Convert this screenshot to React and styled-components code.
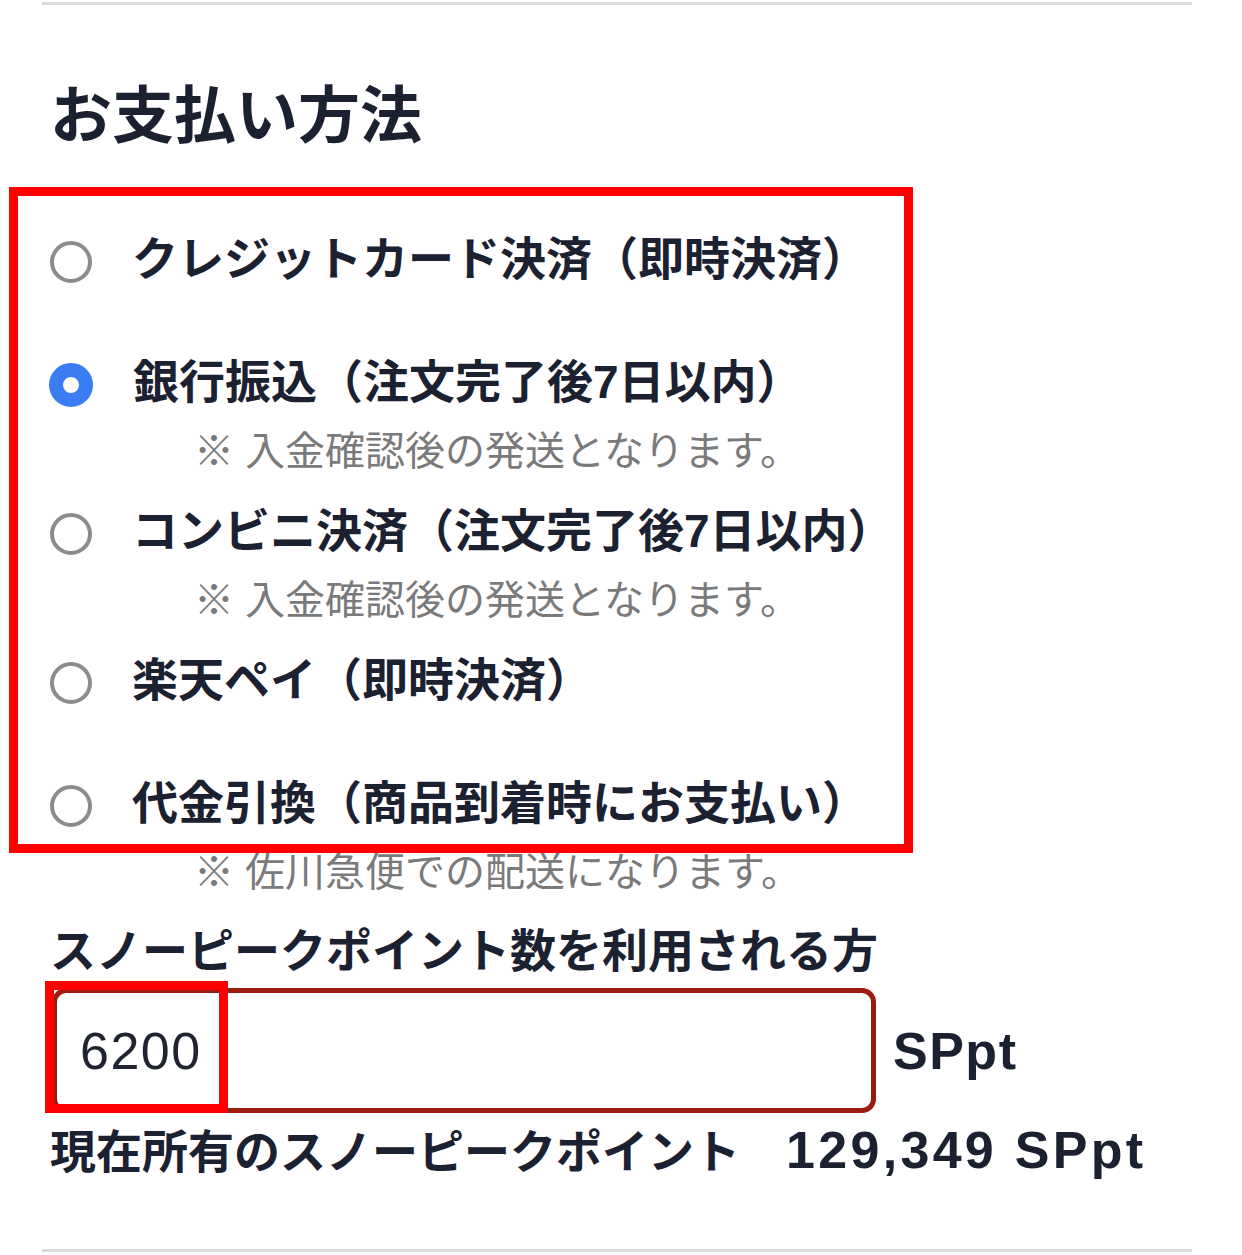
import React from 'react'
import styled, { createGlobalStyle } from 'styled-components'

const GlobalStyle = createGlobalStyle`
    html, body {
        margin: 0;
        padding: 0;
        background: #ffffff;
    }
    body {
        font-family: "Liberation Sans", "Noto Sans CJK JP", sans-serif;
        color: #1b2130;
    }
`

const methods = [
    { id: 'card', label: 'クレジットカード決済（即時決済）' },
    { id: 'bank', label: '銀行振込（注文完了後7日以内）', note: '※ 入金確認後の発送となります。', checked: true },
    { id: 'cvs', label: 'コンビニ決済（注文完了後7日以内）', note: '※ 入金確認後の発送となります。' },
    { id: 'rakuten', label: '楽天ペイ（即時決済）' },
    { id: 'cod', label: '代金引換（商品到着時にお支払い）', note: '※ 佐川急便での配送になります。' },
]

function App() {
    return (
        <Page>
            <GlobalStyle />
            <Divider />
            <Section>
                <Title>お支払い方法</Title>
                <MethodList>
                    {methods.map((m) => (
                        <Method key={m.id}>
                            <MethodRow>
                                <Radio type="radio" name="payment" defaultChecked={!!m.checked} />
                                <MethodLabel>{m.label}</MethodLabel>
                            </MethodRow>
                            {m.note && <Note>{m.note}</Note>}
                        </Method>
                    ))}
                    {/* annotation frame drawn over the list */}
                    <Highlight $top={-37} $left={-41} $width={904} $height={666} />
                </MethodList>

                <PointsLabel>スノーピークポイント数を利用される方</PointsLabel>
                <PointsRow>
                    <PointsInput type="text" defaultValue="6200" />
                    <Unit>SPpt</Unit>
                    <Highlight $top={-7} $left={-7} $width={183} $height={132} />
                </PointsRow>
                <Holdings>
                    現在所有のスノーピークポイント　<Amount>129,349 SPpt</Amount>
                </Holdings>
            </Section>
            <Divider $bottom />
        </Page>
    )
}

const Page = styled.div`
    margin-left: 42px;
    width: 1150px;
    padding-top: 2px;
`

const Divider = styled.hr`
    margin: 0;
    margin-top: ${(p) => (p.$bottom ? '69px' : '0')};
    border: none;
    height: 3px;
    background: #dadada;
`

const Section = styled.div`
    padding: 0 8px;
`

const Title = styled.h2`
    margin: 66px 0 0;
    font-family: "Noto Sans CJK JP", sans-serif;
    font-size: 62px;
    font-weight: 700;
    line-height: 80px;
    color: #1b2130;
`

const MethodList = styled.div`
    position: relative;
    margin-top: 73px;
`

const Method = styled.div`
    display: flex;
    flex-direction: column;
    min-height: 103px;
    margin-bottom: 20px;
`

const MethodRow = styled.label`
    display: flex;
    align-items: center;
    gap: 40px;
    height: 70px;
`

const Radio = styled.input`
    appearance: none;
    -webkit-appearance: none;
    margin: 0;
    box-sizing: border-box;
    width: 42px;
    height: 42px;
    flex-shrink: 0;
    border-radius: 50%;
    border: 4px solid #8c8c8c;
    background: #ffffff;
    transform: translateY(3px);

    &:checked {
        width: 44px;
        height: 44px;
        margin-left: -1px;
        border: 14px solid #3a7cf2;
    }
`

const MethodLabel = styled.span`
    font-family: "Liberation Sans", "Noto Sans CJK JP", sans-serif;
    font-size: 46px;
    font-weight: 700;
    line-height: 70px;
    color: #1b2130;
    white-space: nowrap;
`

const Note = styled.div`
    margin: 9px 0 0 144px;
    font-family: "Liberation Sans", "Noto Sans CJK JP", sans-serif;
    font-size: 40px;
    font-weight: 400;
    line-height: 50px;
    color: #7a7a7a;
    white-space: nowrap;
`

const Highlight = styled.div`
    position: absolute;
    top: ${(p) => p.$top}px;
    left: ${(p) => p.$left}px;
    width: ${(p) => p.$width}px;
    height: ${(p) => p.$height}px;
    box-sizing: border-box;
    border: 9px solid #ff0000;
    pointer-events: none;
`

const PointsLabel = styled.div`
    margin-top: 4px;
    font-family: "Noto Sans CJK JP", sans-serif;
    font-size: 46px;
    font-weight: 700;
    line-height: 60px;
    color: #1b2130;
    white-space: nowrap;
`

const PointsRow = styled.div`
    position: relative;
    display: flex;
    align-items: center;
    gap: 17px;
    margin-top: 11px;
    margin-left: 2px;
`

const PointsInput = styled.input`
    box-sizing: border-box;
    width: 824px;
    height: 125px;
    padding: 0 0 0 23px;
    border: 5px solid #9b1c13;
    border-radius: 14px;
    background: #ffffff;
    font-family: "Liberation Sans", sans-serif;
    font-size: 52px;
    font-weight: 400;
    letter-spacing: 1.5px;
    color: #1f2430;
    outline: none;
`

const Unit = styled.span`
    font-family: "Liberation Sans", sans-serif;
    font-size: 52px;
    font-weight: 700;
    letter-spacing: 1.5px;
    color: #1b2130;
`

const Holdings = styled.div`
    margin-top: 5px;
    font-family: "Noto Sans CJK JP", sans-serif;
    font-size: 46px;
    font-weight: 700;
    line-height: 60px;
    color: #1b2130;
    white-space: nowrap;
`

const Amount = styled.span`
    font-family: "Liberation Sans", sans-serif;
    font-size: 52px;
    letter-spacing: 3.3px;
`

export default App
